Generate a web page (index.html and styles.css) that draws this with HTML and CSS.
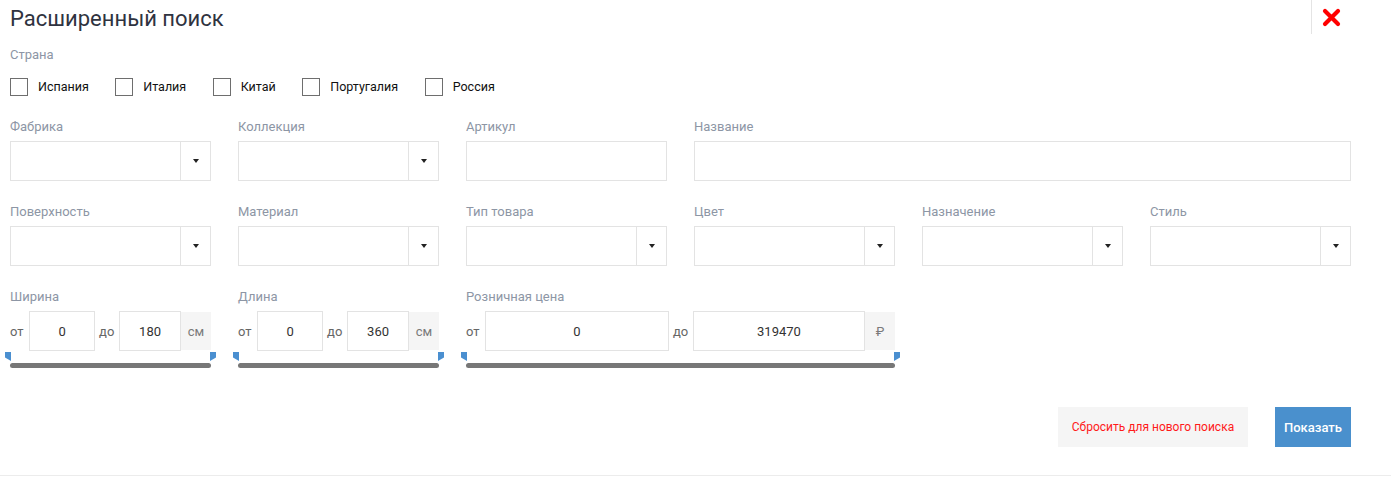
FILE: index.html
```html
<!DOCTYPE html>
<html lang="ru">
<head>
    <meta charset="UTF-8">
    <meta name="viewport" content="width=device-width, initial-scale=1.0">
    <title>Расширенный поиск</title>
    <link rel="stylesheet" href="styles.css">
</head>
<body>
    <div class="search">
        <h1 class="search-title">Расширенный поиск</h1>
        <button class="search-close" type="button" aria-label="Закрыть">
            <svg width="19" height="19" viewBox="0 0 19 19">
                <path d="M3 3 L16 16 M16 3 L3 16" stroke="#ff0000" stroke-width="4.2" stroke-linecap="round"/>
            </svg>
        </button>

        <div class="field-label country-label">Страна</div>
        <div class="countries">
            <label class="check"><span class="check-box"></span>Испания</label>
            <label class="check"><span class="check-box"></span>Италия</label>
            <label class="check"><span class="check-box"></span>Китай</label>
            <label class="check"><span class="check-box"></span>Португалия</label>
            <label class="check"><span class="check-box"></span>Россия</label>
        </div>

        <div class="grid">
            <div class="field">
                <div class="field-label">Фабрика</div>
                <div class="select"><span class="select-value"></span><span class="select-caret"></span></div>
            </div>
            <div class="field">
                <div class="field-label">Коллекция</div>
                <div class="select"><span class="select-value"></span><span class="select-caret"></span></div>
            </div>
            <div class="field">
                <div class="field-label">Артикул</div>
                <input class="text-input" type="text">
            </div>
            <div class="field span-3">
                <div class="field-label">Название</div>
                <input class="text-input" type="text">
            </div>
        </div>

        <div class="grid">
            <div class="field">
                <div class="field-label">Поверхность</div>
                <div class="select"><span class="select-value"></span><span class="select-caret"></span></div>
            </div>
            <div class="field">
                <div class="field-label">Материал</div>
                <div class="select"><span class="select-value"></span><span class="select-caret"></span></div>
            </div>
            <div class="field">
                <div class="field-label">Тип товара</div>
                <div class="select"><span class="select-value"></span><span class="select-caret"></span></div>
            </div>
            <div class="field">
                <div class="field-label">Цвет</div>
                <div class="select"><span class="select-value"></span><span class="select-caret"></span></div>
            </div>
            <div class="field">
                <div class="field-label">Назначение</div>
                <div class="select"><span class="select-value"></span><span class="select-caret"></span></div>
            </div>
            <div class="field">
                <div class="field-label">Стиль</div>
                <div class="select"><span class="select-value"></span><span class="select-caret"></span></div>
            </div>
        </div>

        <div class="grid">
            <div class="field">
                <div class="field-label">Ширина</div>
                <div class="range">
                    <span class="range-word">от</span>
                    <input class="range-input from" type="text" value="0">
                    <span class="range-word to">до</span>
                    <input class="range-input" type="text" value="180">
                    <span class="range-unit">см</span>
                </div>
                <div class="slider"><span class="handle handle-min"></span><span class="track"></span><span class="handle handle-max"></span></div>
            </div>
            <div class="field">
                <div class="field-label">Длина</div>
                <div class="range">
                    <span class="range-word">от</span>
                    <input class="range-input from" type="text" value="0">
                    <span class="range-word to">до</span>
                    <input class="range-input" type="text" value="360">
                    <span class="range-unit">см</span>
                </div>
                <div class="slider"><span class="handle handle-min"></span><span class="track"></span><span class="handle handle-max"></span></div>
            </div>
            <div class="field span-2">
                <div class="field-label">Розничная цена</div>
                <div class="range">
                    <span class="range-word">от</span>
                    <input class="range-input from" type="text" value="0">
                    <span class="range-word to">до</span>
                    <input class="range-input" type="text" value="319470">
                    <span class="range-unit">₽</span>
                </div>
                <div class="slider"><span class="handle handle-min"></span><span class="track"></span><span class="handle handle-max"></span></div>
            </div>
        </div>

        <div class="actions">
            <button class="btn btn-reset" type="button">Сбросить для нового поиска</button>
            <button class="btn btn-show" type="button">Показать</button>
        </div>
    </div>
</body>
</html>
```

FILE: styles.css
```css
body {
    margin: 0;
    font-family: Roboto, 'Liberation Sans', sans-serif;
    font-size: 13px;
    color: #333;
    background: #fff;
}

.search {
    position: relative;
    height: 475px;
    padding: 0 40px 0 10px;
    border-bottom: 1px solid #ececec;
}

.search-title {
    margin: 0;
    padding-top: 6px;
    font-size: 22px;
    font-weight: 400;
    line-height: 26px;
    color: #2f3340;
}

.search-close {
    position: absolute;
    top: 0;
    left: 1311px;
    width: 40px;
    height: 34px;
    padding: 3px 0 0 10px;
    border: none;
    border-left: 1px solid #e4e4e4;
    background: none;
    text-align: left;
    cursor: pointer;
}

.field-label {
    font-size: 13px;
    line-height: 18px;
    color: #8d96a5;
    margin-bottom: 5px;
}

.country-label {
    margin-top: 14px;
}

.countries {
    display: flex;
    align-items: center;
    margin-top: 14px;
    height: 18px;
}

.check {
    display: flex;
    align-items: center;
    margin-right: 26.5px;
    color: #111;
    font-size: 12.5px;
    line-height: 18px;
}

.check-box {
    width: 16px;
    height: 16px;
    border: 1px solid #6e6e6e;
    margin-right: 10px;
}

.grid {
    display: grid;
    grid-template-columns: repeat(6, minmax(0, 1fr));
    column-gap: 27px;
    margin-top: 22px;
}

.field {
    min-width: 0;
}

.span-2 {
    grid-column: span 2;
}

.span-3 {
    grid-column: span 3;
}

.select {
    display: flex;
    height: 38px;
    border: 1px solid #e3e3e3;
    background: #fff;
}

.select-value {
    flex: 1;
}

.select-caret {
    width: 29px;
    border-left: 1px solid #e3e3e3;
    display: flex;
    align-items: center;
    justify-content: center;
}

.select-caret::after {
    content: "";
    border-top: 4px solid #222;
    border-left: 3.5px solid transparent;
    border-right: 3.5px solid transparent;
}

.text-input {
    display: block;
    box-sizing: border-box;
    width: 100%;
    height: 40px;
    border: 1px solid #e3e3e3;
    font: inherit;
}

.range {
    display: flex;
    align-items: center;
    height: 40px;
}

.range-word {
    width: 19px;
    color: #666;
    flex-shrink: 0;
}

.range-word.to {
    width: 24px;
    padding-left: 4px;
    box-sizing: border-box;
}

.range-input {
    flex: 1;
    min-width: 0;
    width: 0;
    box-sizing: border-box;
    height: 40px;
    border: 1px solid #e3e3e3;
    text-align: center;
    font: inherit;
    color: #333;
    padding: 0;
}

.range-input.from {
    flex-grow: 1.07;
}

.range-unit {
    width: 30px;
    height: 38px;
    flex-shrink: 0;
    background: #f5f5f5;
    color: #7a7a7a;
    display: flex;
    align-items: center;
    justify-content: center;
}

.slider {
    position: relative;
    height: 18px;
}

.track {
    position: absolute;
    left: 0;
    right: 0;
    top: 12px;
    height: 5px;
    border-radius: 3px;
    background: #777;
}

.handle {
    position: absolute;
    top: 1px;
    width: 6px;
    height: 9px;
    background: #4a8fd0;
}

.handle-min {
    left: -5px;
    clip-path: polygon(0 0, 100% 0, 100% 100%, 0 60%);
}

.handle-max {
    right: -5px;
    clip-path: polygon(0 0, 100% 0, 100% 60%, 0 100%);
}

.actions {
    display: flex;
    justify-content: flex-end;
    gap: 27px;
    margin-top: 38px;
}

.btn {
    height: 40px;
    border: none;
    font-family: inherit;
    cursor: pointer;
}

.btn-reset {
    width: 190px;
    background: #f5f5f5;
    color: #ff1a1a;
    font-size: 12px;
}

.btn-show {
    width: 76px;
    background: #4a90cd;
    color: #fff;
    font-size: 13px;
    font-weight: 500;
}
```
